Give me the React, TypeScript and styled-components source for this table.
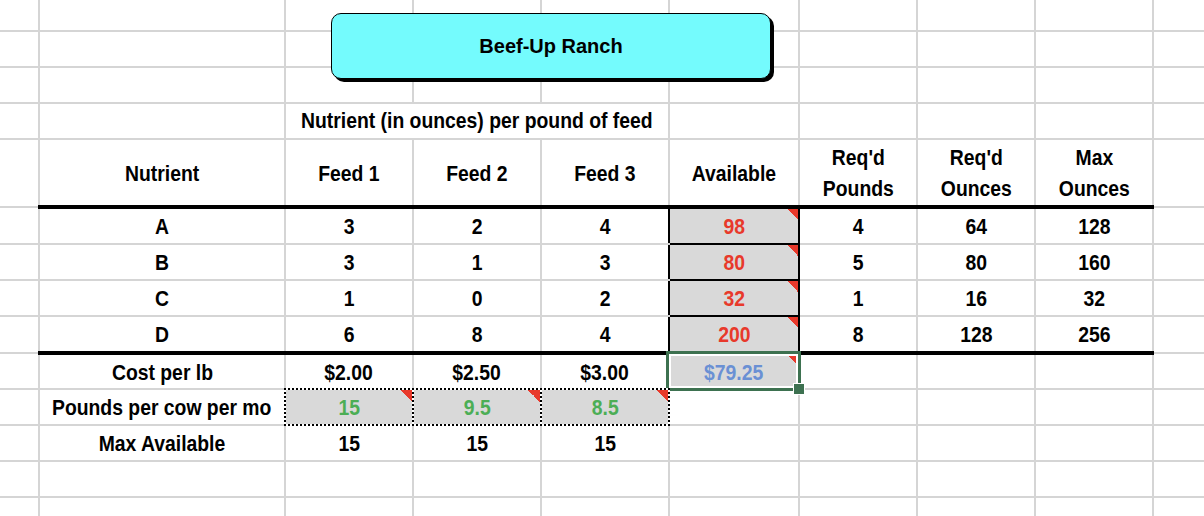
import React from "react";
import styled, { createGlobalStyle, css } from "styled-components";

const GRID = "#d5d5d5";
const INK = "#000000";
const SHADE = "#d9d9d9";
const FLAG = "#e8392b";
const SELECT = "#3d7150";

const TONES = {
  ink: "#000000",
  red: "#e8392b",
  green: "#4cae55",
  blue: "#6a90d4",
};

type Tone = keyof typeof TONES;

const GlobalStyle = createGlobalStyle`
  html, body {
    margin: 0;
    padding: 0;
    background: #ffffff;
    overflow: hidden;
  }
`;

const Sheet = styled.div`
  position: relative;
  width: 1204px;
  height: 516px;
  overflow: hidden;
  font-family: "Liberation Sans", Arial, sans-serif;
  font-weight: 700;
  font-size: 22px;
  color: ${INK};
`;

const Grid = styled.table`
  border-collapse: collapse;
  table-layout: fixed;
  width: 1204px;
`;

const Row = styled.tr<{ $h: number }>`
  height: ${(p) => p.$h}px;
`;

/* The sheet uses a condensed bold face; Liberation Sans is narrowed to match. */
const Txt = styled.span`
  display: inline-block;
  margin: 0 -40px;
  transform: scaleX(0.88);
`;

interface CellProps {
  $fill?: boolean;
  $boxed?: boolean;
  $boxLeft?: boolean;
  $boxRight?: boolean;
  $thick?: boolean;
  $tone?: Tone;
  $flag?: number;
  $flagTop?: number;
  $flagRight?: number;
  $anchor?: boolean;
  $marquee?: boolean;
  $lines?: boolean;
  $raised?: boolean;
}

const Cell = styled.td<CellProps>`
  box-sizing: border-box;
  padding: ${(p) => (p.$raised ? 0 : 2)}px 0 0;
  border: 2px solid ${GRID};
  text-align: center;
  vertical-align: middle;
  white-space: nowrap;
  line-height: ${(p) => (p.$lines ? 31 : 24)}px;
  color: ${(p) => TONES[p.$tone ?? "ink"]};
  background-color: ${(p) => (p.$fill ? SHADE : "transparent")};
  ${(p) =>
    p.$flag &&
    css`
      background-image: linear-gradient(to bottom left, ${FLAG} 50%, transparent 50%);
      background-size: ${p.$flag}px ${p.$flag}px;
      background-repeat: no-repeat;
      background-position: top ${p.$flagTop ?? 0}px right ${p.$flagRight ?? 0}px;
    `}
  ${(p) => p.$boxed && css`border-color: ${INK};`}
  ${(p) => p.$boxRight && css`border-right-color: ${INK};`}
  ${(p) => p.$boxLeft && css`border-left-color: ${INK};`}
  ${(p) => p.$thick && css`border-bottom: 4px solid ${INK};`}
  ${(p) => (p.$anchor || p.$marquee) && css`position: relative;`}
  ${(p) =>
    p.$marquee &&
    css`
      &::before,
      &::after {
        content: "";
        position: absolute;
        inset: -2px;
        pointer-events: none;
      }
      &::before {
        border: 2px solid #ffffff;
      }
      &::after {
        border: 2px dotted ${INK};
      }
    `}

  tr:first-child > & {
    border-top: 0;
  }
  &:first-child {
    border-left: 0;
  }
  &:last-child {
    border-right: 0;
  }
`;

const Selection = styled.span`
  position: absolute;
  top: -4px;
  right: -3px;
  bottom: -3px;
  left: -4px;
  border: 3px solid ${SELECT};
  box-shadow: inset 0 0 0 2px #ffffff;
  pointer-events: none;
`;

const Handle = styled.span`
  position: absolute;
  right: -7px;
  bottom: -7px;
  width: 10px;
  height: 10px;
  background: ${SELECT};
  border: 1px solid #ffffff;
`;

const Banner = styled.div`
  position: absolute;
  left: 331px;
  top: 13px;
  width: 440px;
  height: 66px;
  box-sizing: border-box;
  border: 1px solid ${INK};
  border-radius: 10px;
  background: #74fbfd;
  box-shadow: 3px 3px 0 ${INK};
  display: flex;
  align-items: center;
  justify-content: center;
  font-family: "Liberation Sans", Arial, sans-serif;
  font-size: 20px;
  font-weight: 700;
  z-index: 2;
`;

const COLS = [39, 246, 128, 128, 128, 130, 118, 118, 118, 51];

const NUTRIENTS = [
  { name: "A", feeds: ["3", "2", "4"], avail: "98", pounds: "4", ounces: "64", max: "128" },
  { name: "B", feeds: ["3", "1", "3"], avail: "80", pounds: "5", ounces: "80", max: "160" },
  { name: "C", feeds: ["1", "0", "2"], avail: "32", pounds: "1", ounces: "16", max: "32" },
  { name: "D", feeds: ["6", "8", "4"], avail: "200", pounds: "8", ounces: "128", max: "256" },
];

const COSTS = ["$2.00", "$2.50", "$3.00"];
const POUNDS = ["15", "9.5", "8.5"];
const MAXES = ["15", "15", "15"];

const EmptyRow: React.FC<{ h: number }> = ({ h }) => (
  <Row $h={h}>
    {COLS.map((_, i) => (
      <Cell key={i} />
    ))}
  </Row>
);

const Blank: React.FC<{ n: number }> = ({ n }) => (
  <>
    {Array.from({ length: n }, (_, i) => (
      <Cell key={i} />
    ))}
  </>
);

export default function App() {
  return (
    <>
      <GlobalStyle />
      <Sheet>
        <Banner>Beef-Up Ranch</Banner>
        <Grid>
          <colgroup>
            {COLS.map((w, i) => (
              <col key={i} style={{ width: w }} />
            ))}
          </colgroup>
          <tbody>
            <EmptyRow h={31} />
            <EmptyRow h={36} />
            <EmptyRow h={36} />
            <Row $h={36}>
              <Blank n={2} />
              <Cell colSpan={3} $raised>
                <Txt>Nutrient (in ounces) per pound of feed</Txt>
              </Cell>
              <Blank n={5} />
            </Row>
            <Row $h={68}>
              <Cell />
              <Cell $thick>
                <Txt>Nutrient</Txt>
              </Cell>
              <Cell $thick>
                <Txt>Feed 1</Txt>
              </Cell>
              <Cell $thick>
                <Txt>Feed 2</Txt>
              </Cell>
              <Cell $thick>
                <Txt>Feed 3</Txt>
              </Cell>
              <Cell $thick>
                <Txt>Available</Txt>
              </Cell>
              <Cell $thick $lines $raised>
                <Txt>
                  Req'd
                  <br />
                  Pounds
                </Txt>
              </Cell>
              <Cell $thick $lines $raised>
                <Txt>
                  Req'd
                  <br />
                  Ounces
                </Txt>
              </Cell>
              <Cell $thick $lines $raised>
                <Txt>
                  Max
                  <br />
                  Ounces
                </Txt>
              </Cell>
              <Cell />
            </Row>
            {NUTRIENTS.map((n, r) => {
              const last = r === NUTRIENTS.length - 1;
              return (
                <Row key={n.name} $h={r === 0 || last ? 37 : 36}>
                  <Cell />
                  <Cell $thick={last}>
                    <Txt>{n.name}</Txt>
                  </Cell>
                  {n.feeds.map((f, i) => (
                    <Cell key={i} $thick={last} $boxRight={i === 2}>
                      <Txt>{f}</Txt>
                    </Cell>
                  ))}
                  <Cell $thick={last} $boxed $fill $tone="red" $flag={11}>
                    <Txt>{n.avail}</Txt>
                  </Cell>
                  <Cell $thick={last} $boxLeft>
                    <Txt>{n.pounds}</Txt>
                  </Cell>
                  <Cell $thick={last}>
                    <Txt>{n.ounces}</Txt>
                  </Cell>
                  <Cell $thick={last}>
                    <Txt>{n.max}</Txt>
                  </Cell>
                  <Cell />
                </Row>
              );
            })}
            <Row $h={36}>
              <Cell />
              <Cell>
                <Txt>Cost per lb</Txt>
              </Cell>
              {COSTS.map((c) => (
                <Cell key={c}>
                  <Txt>{c}</Txt>
                </Cell>
              ))}
              <Cell $anchor $fill $tone="blue" $flag={8} $flagTop={1} $flagRight={2}>
                <Txt>$79.25</Txt>
                <Selection />
                <Handle />
              </Cell>
              <Blank n={4} />
            </Row>
            <Row $h={36}>
              <Cell />
              <Cell>
                <Txt>Pounds per cow per mo</Txt>
              </Cell>
              {POUNDS.map((v, i) => (
                <Cell key={i} $marquee $fill $tone="green" $flag={12}>
                  <Txt>{v}</Txt>
                </Cell>
              ))}
              <Blank n={5} />
            </Row>
            <Row $h={36}>
              <Cell />
              <Cell>
                <Txt>Max Available</Txt>
              </Cell>
              {MAXES.map((v, i) => (
                <Cell key={i}>
                  <Txt>{v}</Txt>
                </Cell>
              ))}
              <Blank n={5} />
            </Row>
            <EmptyRow h={36} />
            <EmptyRow h={36} />
          </tbody>
        </Grid>
      </Sheet>
    </>
  );
}
